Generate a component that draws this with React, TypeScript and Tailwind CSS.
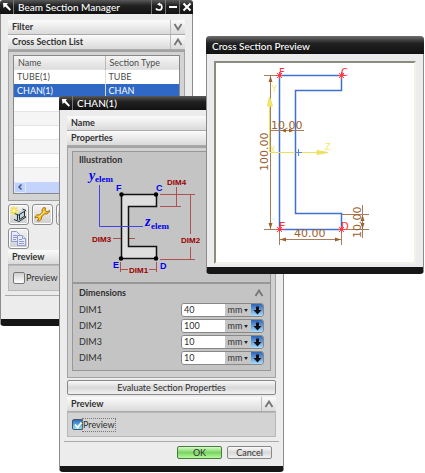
import React, { useState } from 'react';

function Cursor() {
  return (
    <svg viewBox="0 0 12 12" className="h-3 w-3 shrink-0" aria-hidden="true">
      <path d="M2 2h5L5.7 3.6 10 8.5 8.7 9.8 4.2 5.4 2.5 7z" fill="#fff" />
    </svg>
  );
}

function Chevron({ up = false }: { up?: boolean }) {
  return (
    <svg viewBox="0 0 10 8" className="h-2 w-2.5" fill="none" stroke="#777" strokeWidth="1.9" aria-hidden="true">
      <path d={up ? 'M1.5 7 5 1.5 8.5 7' : 'M1.5 1 5 6.5 8.5 1'} />
    </svg>
  );
}

function TitleBar({ title, children }: { title: string; children?: React.ReactNode }) {
  return (
    <header className="-mx-px flex h-[14px] items-center rounded-t-[3px] bg-linear-to-b from-[#5a5a5a] via-[#222] via-40% to-[#111] text-white">
      <span className="flex h-full w-[14px] items-center justify-center border-r border-[#777]">
        <Cursor />
      </span>
      <h1 className="flex-1 pl-1 text-[10px] leading-[13px] font-medium whitespace-nowrap">{title}</h1>
      {children}
    </header>
  );
}

function GroupHeader({ title, up }: { title: string; up?: boolean }) {
  return (
    <div className="flex h-[15px] items-center border-b border-[#aaa] bg-linear-to-b from-[#fbfbfb] to-[#dadada]">
      <h2 className="flex-1 pl-1 text-[9px] leading-[14px] font-bold">{title}</h2>
      <button aria-label={`Toggle ${title}`} className="flex h-full w-[15px] items-center justify-center border-l border-[#bbb]">
        <Chevron up={up} />
      </button>
    </div>
  );
}

function ToolButton({ label, children }: { label: string; children?: React.ReactNode }) {
  return (
    <button aria-label={label} className="flex h-[21px] w-[21px] items-center justify-center rounded-[3px] border border-[#8d8d8d] bg-linear-to-b from-[#f4f4f4] to-[#cfcfcf] shadow-[inset_0_0_0_1px_#fff]">
      {children}
    </button>
  );
}

function BeamIcon() {
  return (
    <svg viewBox="0 0 17 17" className="h-[17px] w-[17px]" aria-hidden="true">
      <path d="M6 8 13 3.500l3 1-1.500 1.500v4.500l1.500.5-7 5-5-1.500 2-1.500V9.500z" fill="#c9d4d9" />
      <path d="M4.500 7.500 8.500 9 16 4.500 12.500 3M7.500 9v5M4 13.500l5 2L16 11l-1.500-.700M9.500 9v4.500l5-3.300V6" fill="none" stroke="#1d3038" />
      <path d="M4 0v9M0 4.500h8.500M1 1.500l6 6M7 1.500l-6 6" stroke="#f3dc28" strokeWidth="1.200" />
      <circle cx="4" cy="4.500" r="1.500" fill="#fffbb0" />
    </svg>
  );
}

function WrenchIcon() {
  return (
    <svg viewBox="0 0 17 17" className="h-[17px] w-[17px]" aria-hidden="true">
      <path d="M10 1.500c-2 1-2.500 3-1.500 4.500L5.500 9c-2-1-4.500.5-4.500 3l2-1 1.500 1.500-1 2.500c2.500.5 4.500-1.500 4-4l3-3.200c2.500.8 5-.8 5-3.300L13 6l-2-1.500.5-2.500z" fill="#fac71c" stroke="#a66c12" />
      <path d="m5 11 6-6" stroke="#fff3a0" />
    </svg>
  );
}

function InfoIcon() {
  return (
    <svg viewBox="0 0 17 17" className="h-[17px] w-[17px]" aria-hidden="true">
      <circle cx="8.500" cy="8.500" r="7.500" fill="#c9cdf5" stroke="#8088cc" />
    </svg>
  );
}

function CopyIcon() {
  return (
    <svg viewBox="0 0 17 17" className="h-[17px] w-[17px]" fill="#e6ebfb" stroke="#8f9ac8" aria-hidden="true">
      <path d="M1.500 1.500h5l3 3v7h-8z" />
      <path d="M3 5.500h4M3 7.500h4M3 9.500h3" />
      <path d="M7.500 5.500h5l3 3v7h-8z" />
      <path d="M12.500 5.500v3h3M9 9.500h3M9 11.500h5M9 13.500h5" />
    </svg>
  );
}

const sections = [
  { name: 'TUBE(1)', type: 'TUBE' },
  { name: 'CHAN(1)', type: 'CHAN' },
  { name: '', type: '' },
  { name: '', type: '' },
  { name: '', type: '' },
  { name: '', type: '' },
  { name: '', type: '' },
  { name: '', type: '' },
];

function SectionManager() {
  const [preview, setPreview] = useState(false);
  return (
    <section className="absolute top-0 left-0 w-[193px] rounded-[4px] border-x border-b-[7px] border-x-[#8c8c8c] border-b-[#161616] bg-[#ececec]">
      <TitleBar title="Beam Section Manager">
        <div className="flex h-full">
          <button aria-label="Reset" className="flex w-3.5 items-center justify-center border-l border-[#777]">
            <svg viewBox="0 0 10 10" className="h-2.5 w-2.5" fill="none" stroke="#fff" strokeWidth="1.700"><path d="M5.500 2C8.500 2.500 9 8 5 8 3.500 8 2.500 7.500 2 6.500" /><path d="M3 2.200 6 .5v3.500z" fill="#fff" stroke="none" /></svg>
          </button>
          <button aria-label="Minimize" className="flex w-3.5 items-center justify-center border-l border-[#777]">
            <span className="h-0.5 w-2 bg-white" />
          </button>
          <button aria-label="Close" className="flex w-3.5 items-center justify-center border-l border-[#777]">
            <svg viewBox="0 0 10 10" className="h-2.5 w-2.5" stroke="#fff" strokeWidth="2"><path d="m1.500 1.500 7 7m0-7-7 7" /></svg>
          </button>
        </div>
      </TitleBar>
      <div className="px-[7px] pt-1.5">
        <GroupHeader title="Filter" />
        <GroupHeader title="Cross Section List" up />
        <div className="border border-t-2 border-[#a3a3a3] bg-[#d3d3d3] px-1 pt-[3px] pb-1.5">
          <div className="border border-[#888] bg-white">
            <table className="w-full table-fixed border-collapse text-[9px] leading-[13px] text-[#4c4c4c]">
              <thead>
                <tr className="h-[13px] bg-linear-to-b from-[#f5f5f5] to-[#dcdcdc] text-left">
                  <th className="w-[91px] border-r border-[#bbb] p-0 pl-1 font-normal">Name</th>
                  <th className="p-0 pl-1 font-normal">Section Type</th>
                </tr>
              </thead>
              <tbody>
                {sections.map((s, i) => (
                  <tr key={i} className={i === 1 ? 'h-3.5 bg-[#2f69c5] text-white' : 'h-3.5 border-t border-[#e4e4e4] even:bg-[#f5f5f5]'}>
                    <td className="border-r border-[#ddd] p-0 pl-[3px]">{s.name}</td>
                    <td className="p-0 pl-[3px]">{s.type}</td>
                  </tr>
                ))}
              </tbody>
            </table>
            <div className="flex h-[11px] bg-[#c3d3fb]">
              <button aria-label="Scroll left" className="flex w-3 items-center justify-center rounded-[2px] border border-[#e3eafd] bg-[#bfd0fa]">
                <svg viewBox="0 0 6 8" className="h-2 w-1.5" fill="none" stroke="#405a94" strokeWidth="1.500"><path d="M4.500 1.500 2 4l2.500 2.500" /></svg>
              </button>
            </div>
          </div>
        </div>
        <div className="flex flex-col gap-[3px] pt-[3px] pb-px">
          <div className="flex gap-[3px]">
            <ToolButton label="Create section"><BeamIcon /></ToolButton>
            <ToolButton label="Edit section"><WrenchIcon /></ToolButton>
            <ToolButton label="Section information"><InfoIcon /></ToolButton>
          </div>
          <ToolButton label="Copy section"><CopyIcon /></ToolButton>
        </div>
        <GroupHeader title="Preview" up />
        <div className="flex h-[26px] items-center border border-[#b8b8b8] bg-[#d3d3d3] pl-1">
          <label className="flex items-center gap-px text-[9px] leading-3">
            <input type="checkbox" checked={preview} onChange={(e) => setPreview(e.target.checked)} className="h-3 w-3 appearance-none rounded-[2px] border border-[#777] bg-linear-to-b from-[#d0d0d0] to-white checked:bg-[#2f69c5]" />
            Preview
          </label>
        </div>
      </div>
      <div className="mx-1 mt-1 h-6 border-t border-[#aaa]" />
    </section>
  );
}

function ChannelDiagram() {
  return (
    <svg viewBox="73 166 197 116" className="block h-[116px] w-full font-['Liberation_Sans',sans-serif] text-[8px] font-bold" role="img" aria-label="Channel section">
      <g stroke="#b05050" fill="none">
        <path d="M160 194.500h35M160 206.500h21M176.500 187v20M190.500 194v40M190.500 247v12M160 259.500h35M113 238.500h22M120.500 262v10M156.500 262v10M121 269.500h7M149 269.500h7" />
      </g>
      <path d="M121.500 194.500h35v12h-28v40h28v12h-35z" fill="#dedede" stroke="#111" strokeWidth="1.500" />
      <path d="M99.500 185v41.500H143" fill="none" stroke="#4242e6" />
      <g fill="#000"><circle cx="121.500" cy="194.500" r="2.200" /><circle cx="156" cy="194.500" r="2.200" /><circle cx="121" cy="258.500" r="2.200" /><circle cx="156" cy="258.500" r="2.200" /></g>
      <g fill="#900"><text x="167" y="185">DIM4</text><text x="92" y="242">DIM3</text><text x="181" y="243">DIM2</text><text x="129" y="273">DIM1</text></g>
      <g fill="#0000f0" className="text-[9px]"><text x="116" y="191">F</text><text x="156" y="191">C</text><text x="113" y="268">E</text><text x="160" y="269">D</text></g>
      <g fill="#0000f0" className="font-['Liberation_Serif',serif]">
        <text x="89" y="180" className="text-[14px] italic">y</text><text x="95" y="182" className="text-[9px]">elem</text>
        <text x="145" y="226" className="text-[14px] italic">z</text><text x="151" y="229" className="text-[9px]">elem</text>
      </g>
    </svg>
  );
}

function DimensionRow({ label, initial }: { label: string; initial: string }) {
  const [value, setValue] = useState(initial);
  return (
    <div className="flex h-4 items-center">
      <label htmlFor={label} className="flex-1 text-[9px] leading-3">{label}</label>
      <div className="flex h-[14px] w-[83px] overflow-hidden rounded-[3px] border border-[#888] bg-[#c6c6c6]">
        <input id={label} value={value} onChange={(e) => setValue(e.target.value)} className="w-[43px] bg-white px-0.5 text-[9px] leading-3 outline-none" />
        <button aria-label={`${label} unit`} className="flex flex-1 items-center justify-center gap-0.5 text-[9px] leading-3">
          mm
          <svg viewBox="0 0 5 4" className="h-[3px] w-1"><path d="M0 0h5L2.500 4z" fill="#222" /></svg>
        </button>
        <button aria-label={`${label} options`} className="flex w-3 items-center justify-center bg-linear-to-b from-[#2e64b4] to-[#a5dcff]">
          <svg viewBox="0 0 9 9" className="h-[9px] w-[9px]"><path d="M3 .5h3V4h2.500l-4 4.500L.5 4H3z" fill="#111" /></svg>
        </button>
      </div>
    </div>
  );
}

function ChannelDialog() {
  const [preview, setPreview] = useState(true);
  return (
    <section className="absolute top-24 left-[59px] w-[225px] rounded-[4px] border-x border-b-[6px] border-x-[#8c8c8c] border-b-[#161616] bg-[#ececec]">
      <TitleBar title="CHAN(1)" />
      <div className="px-[7px] pt-1.5">
        <GroupHeader title="Name" />
        <GroupHeader title="Properties" up />
        <div className="border border-t-2 border-[#a3a3a3] bg-[#d0d0d0] px-1 pt-[3px] pb-1.5">
          <div className="border border-[#979797] bg-[#c4c4c4]">
            <h3 className="h-[14px] pl-1.5 text-[9px] leading-[15px] font-bold">Illustration</h3>
            <ChannelDiagram />
          </div>
          <div className="border border-[#979797] bg-[#c4c4c4] pr-1.5 pb-1 pl-1.5">
            <div className="flex h-[18px] items-center justify-between">
              <h3 className="text-[9px] leading-3 font-bold">Dimensions</h3>
              <button aria-label="Toggle Dimensions"><Chevron up /></button>
            </div>
            <DimensionRow label="DIM1" initial="40" />
            <DimensionRow label="DIM2" initial="100" />
            <DimensionRow label="DIM3" initial="10" />
            <DimensionRow label="DIM4" initial="10" />
          </div>
        </div>
        <button className="my-0.5 block h-[15px] w-full rounded-[2px] border border-[#888] bg-linear-to-b from-[#fafafa] via-[#d9d9d9] to-[#f1f1f1] text-[9px] leading-3">Evaluate Section Properties</button>
        <GroupHeader title="Preview" up />
        <div className="flex h-[25px] items-center border border-[#b8b8b8] bg-[#d3d3d3] pl-1">
          <label className="flex items-center text-[9px] leading-3">
            <span className="grid h-[11px] w-[11px] place-items-center">
              <input type="checkbox" checked={preview} onChange={(e) => setPreview(e.target.checked)} className="col-start-1 row-start-1 h-[11px] w-[11px] appearance-none rounded-[2px] border border-[#456] bg-linear-to-b from-[#2d6cbc] to-[#8be5ff]" />
              {preview && <svg viewBox="0 0 10 10" className="pointer-events-none col-start-1 row-start-1 h-2.5 w-2.5" fill="none" stroke="#fff" strokeWidth="1.800"><path d="m2 4.500 2.500 3 4-5" /></svg>}
            </span>
            <span className="outline-1 outline-dotted outline-[#777]">Preview</span>
          </label>
        </div>
      </div>
      <footer className="mx-1 mt-1 flex h-[25px] justify-end gap-[5px] border-t border-[#aaa] pt-1 pr-[7px]">
        <button className="h-[13px] w-[45px] rounded-[2px] border border-[#477b40] bg-linear-to-b from-[#d5fac5] via-[#7ad562] to-[#b5f89c] text-[9px] leading-[11px]">OK</button>
        <button className="h-[13px] w-[45px] rounded-[2px] border border-[#888] bg-linear-to-b from-[#fafafa] via-[#d9d9d9] to-[#f1f1f1] text-[9px] leading-[11px]">Cancel</button>
      </footer>
    </section>
  );
}

function SectionDrawing() {
  return (
    <svg viewBox="216 63 198 199" className="block h-[199px] w-full bg-white font-['DejaVu_Sans',sans-serif] text-[11px]" role="img" aria-label="Cross section drawing">
      <path d="M279.500 75.500h62v15h-46v123h46v16h-62z" fill="none" stroke="#3f70d2" strokeWidth="1.500" />
      <g stroke="#a87d5c" fill="none">
        <path d="M264 75.500h15M264 229.500h15M270.500 76v153M271 130.500h33M279.500 230v15M341.500 230v15M280 239.500h61M342 214.500h27M342 229.500h27M362.500 205v33" />
      </g>
      <g fill="#9b6130">
        <path d="m270.500 76-2 6h4zM270.500 229l-2-6h4zM280 239.500l6-2v4zM341 239.500l-6-2v4zM362.500 215l-2 6h4zM362.500 229l-2-6h4zM281 130.500l5-2v4zM294 130.500l-5-2v4z" />
        <text x="271" y="129">10.00</text>
        <text x="294" y="237">40.00</text>
        <text transform="translate(268 171) rotate(-90)">100.00</text>
        <text transform="translate(361 238) rotate(-90)">10.00</text>
      </g>
      <g stroke="#e9df61" fill="#f4e963">
        <path d="M270 152.500h57M269.500 152v-45M269.500 97l-2 9h5zM328 152.500l-11-2v4z" />
        <g stroke="none" className="text-[8px]"><text x="272" y="92">Y</text><text x="325" y="150">Z</text><text x="270" y="153">X</text></g>
      </g>
      <path d="M298.500 149v7M295 152.500h7" stroke="#5784dc" />
      <g stroke="#ff3d47" fill="#ff3038">
        <path d="M276 75.500h7M279.500 72v7M277 73l5 5m0-5-5 5M338 75.500h7M341.500 72v7M339 73l5 5m0-5-5 5M276 229.500h7M279.500 226v7M277 227l5 5m0-5-5 5M338 229.500h7M341.500 226v7M339 227l5 5m0-5-5 5" />
        <g stroke="none" className="text-[10px]"><text x="279" y="76">F</text><text x="341" y="76">C</text><text x="279" y="230">E</text><text x="341" y="230">D</text></g>
      </g>
    </svg>
  );
}

function CrossSectionPreview() {
  return (
    <section className="absolute top-9 left-[206px] w-[218px] rounded-[4px] border-x border-b-[7px] border-x-[#8c8c8c] border-b-[#161616] bg-[#ececec]">
      <header className="-mx-px h-[18px] rounded-t-[4px] bg-linear-to-b from-[#707070] via-[#222] via-40% to-[#111] pl-1.5 text-white">
        <h1 className="pt-[3px] text-[10px] leading-[14px] font-medium">Cross Section Preview</h1>
      </header>
      <div className="px-[7px] pt-[7px] pb-[3px]">
        <div className="border-2 border-t-[#8c8b7f] border-r-[#f3f2e8] border-b-[#f3f2e8] border-l-[#8c8b7f]">
          <SectionDrawing />
        </div>
      </div>
    </section>
  );
}

export default function App() {
  return (
    <main className="relative h-screen w-full overflow-hidden bg-white font-['Lato','Noto_Sans',sans-serif] text-[#303030]">
      <SectionManager />
      <ChannelDialog />
      <CrossSectionPreview />
    </main>
  );
}
